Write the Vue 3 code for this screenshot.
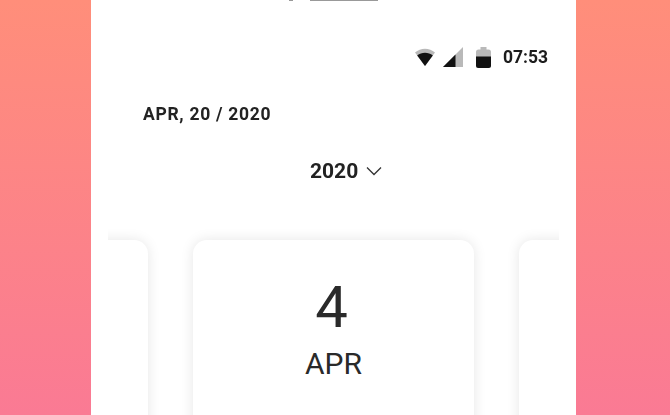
<template>
  <div class="page">
    <div class="phone">
      <div class="top-cut">
        <span class="top-dot"></span>
        <span class="top-bar"></span>
      </div>

      <div class="status-bar">
        <svg class="icon-wifi" width="20" height="18" viewBox="0 0 20 18">
          <path d="M0 4.500C5.500 -0.600 14.500 -0.600 20 4.500L10 18Z" fill="#b9b9b9" />
          <path d="M2.200 7.400C6.500 3.800 13.500 3.800 17.800 7.400L10 18Z" fill="#111" />
        </svg>
        <svg class="icon-signal" width="20" height="20" viewBox="0 0 20 20">
          <path d="M20 0V20H0Z" fill="#b9b9b9" />
          <path d="M12.500 7.500V20H0Z" fill="#111" />
        </svg>
        <svg class="icon-battery" width="15" height="21" viewBox="0 0 15 21">
          <path d="M4.500 0H10.500V2.500H12.500Q15 2.500 15 5V18.500Q15 21 12.500 21H2.500Q0 21 0 18.500V5Q0 2.500 2.500 2.500H4.500Z" fill="#b9b9b9" />
          <path d="M0 9.500H15V18.500Q15 21 12.500 21H2.500Q0 21 0 18.500Z" fill="#111" />
        </svg>
        <span class="status-time">07:53</span>
      </div>

      <div class="current-date">APR, 20 / 2020</div>

      <div class="year-select">
        <span>2020</span>
        <svg width="16" height="10" viewBox="0 0 16 10">
          <path d="M1 1.500L8 8.500L15 1.500" fill="none" stroke="#333" stroke-width="1.300" />
        </svg>
      </div>

      <div class="carousel">
        <div v-for="card in cards" :key="card.id" class="day-card">
          <div class="day-number">{{ card.day }}</div>
          <div class="day-month">{{ card.month }}</div>
        </div>
      </div>
    </div>
  </div>
</template>

<script setup>
const cards = [
  { id: 1, day: '', month: '' },
  { id: 2, day: '4', month: 'APR' },
  { id: 3, day: '', month: '' }
]
</script>

<style>
html,
body {
  margin: 0;
  overflow: hidden;
}
</style>

<style scoped>
.page {
  width: 670px;
  height: 415px;
  overflow: hidden;
  padding-left: 91px;
  box-sizing: border-box;
  background: linear-gradient(180deg, #ff8e7a 0%, #fa7a94 100%);
  font-family: Roboto, "Liberation Sans", sans-serif;
}

.phone {
  width: 485px;
  height: 415px;
  background: #fff;
  overflow: hidden;
}

.top-cut {
  height: 2px;
  display: flex;
  align-items: flex-start;
  padding-left: 198px;
  gap: 17px;
  filter: blur(0.4px);
}

.top-dot {
  width: 4px;
  height: 1px;
  background: #999;
}

.top-bar {
  width: 68px;
  height: 1px;
  background: #999;
}

.status-bar {
  display: flex;
  align-items: center;
  height: 22px;
  margin-top: 44px;
  padding-left: 324px;
  filter: blur(0.4px);
}

.icon-signal {
  margin-left: 8px;
}

.icon-battery {
  margin-left: 13px;
}

.status-time {
  margin-left: 12px;
  font-size: 17.500px;
  font-weight: 700;
  color: #1c1c1c;
}

.current-date {
  margin-top: 34px;
  padding-left: 52px;
  font-size: 17.500px;
  line-height: 24px;
  font-weight: 700;
  letter-spacing: 0.7px;
  color: #222;
  filter: blur(0.3px);
}

.year-select {
  display: flex;
  align-items: center;
  gap: 8px;
  margin-top: 31px;
  padding-left: 219px;
  height: 28px;
  font-size: 21px;
  font-weight: 700;
  color: #222;
  filter: blur(0.3px);
}

.carousel {
  display: flex;
  justify-content: center;
  gap: 45px;
  margin: 0 17px;
  padding: 55px 0 40px;
  overflow: hidden;
}

.day-card {
  flex: 0 0 281px;
  height: 300px;
  box-sizing: border-box;
  padding-top: 34px;
  border-radius: 14px;
  background: #fff;
  box-shadow: 0 0 13px rgba(0, 0, 0, 0.1);
  text-align: center;
  color: #2a2a2a;
}

.day-number {
  padding-right: 4px;
  font-size: 58px;
  line-height: 66px;
}

.day-month {
  margin-top: 6px;
  font-size: 30px;
  line-height: 36px;
}
</style>
